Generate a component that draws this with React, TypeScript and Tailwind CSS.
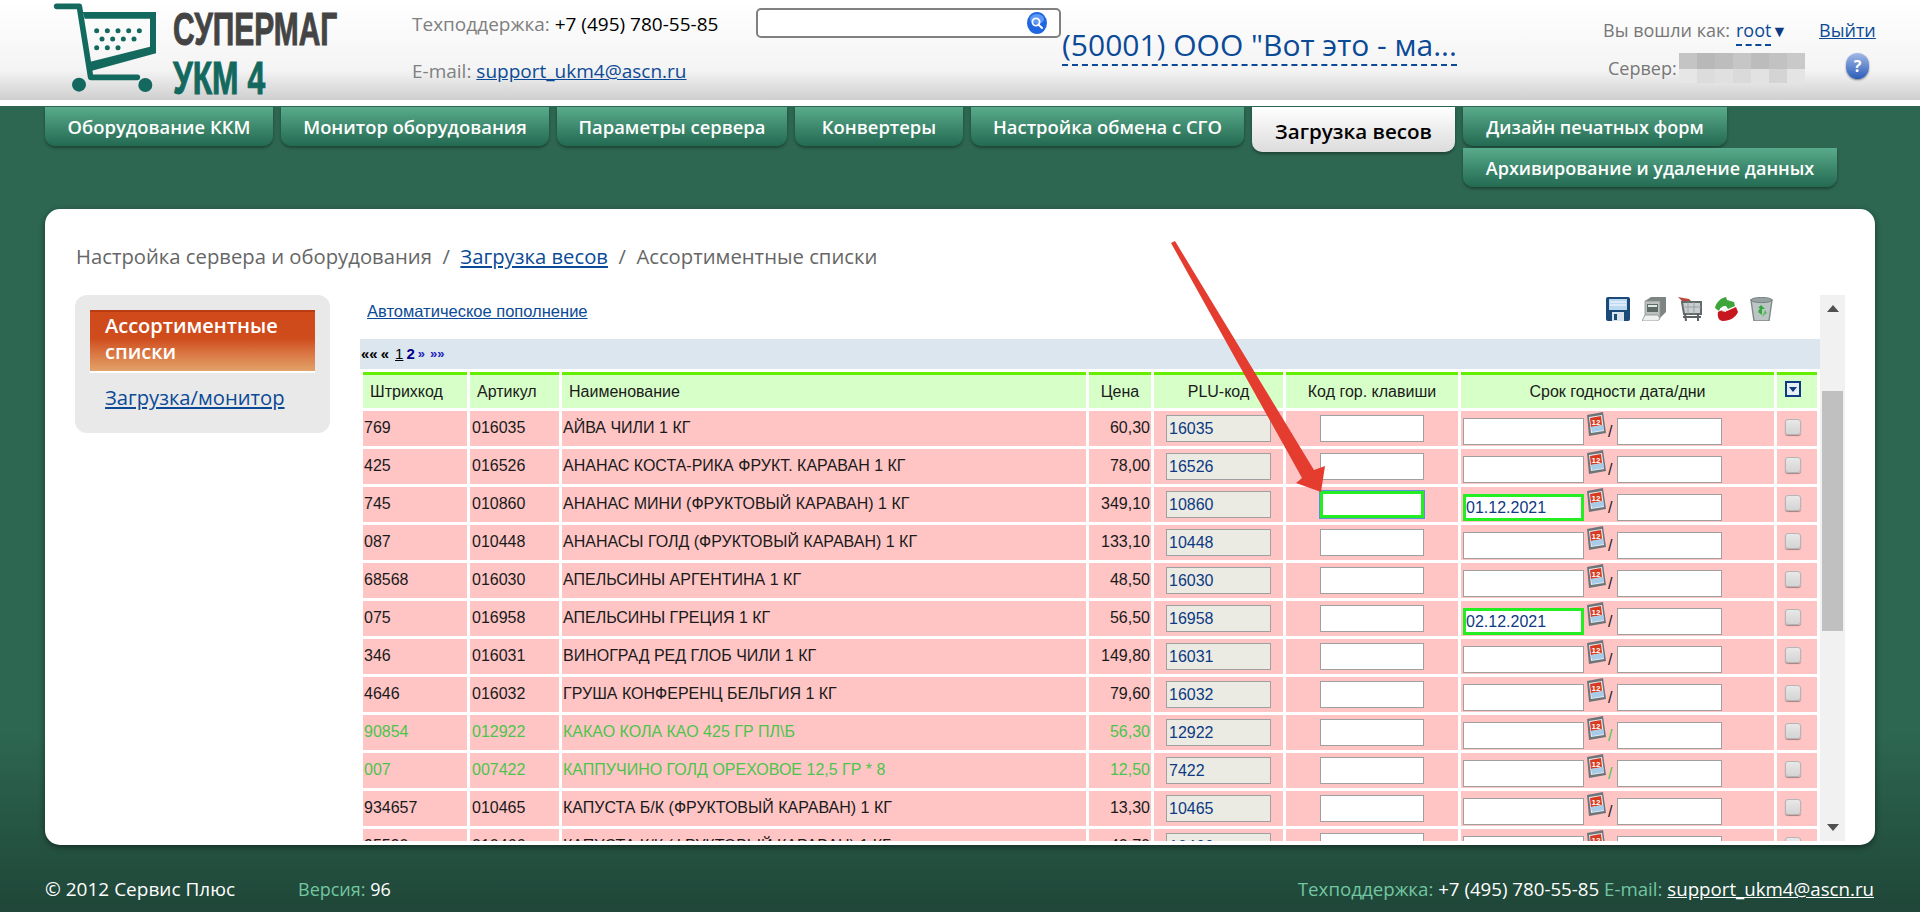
const TABS_LEFT = [
  { label: "Оборудование ККМ", width: "w-[228px]" },
  { label: "Монитор оборудования", width: "w-[268px]" },
  { label: "Параметры сервера", width: "w-[230px]" },
  { label: "Конвертеры", width: "w-[168px]" },
  { label: "Настройка обмена с СГО", width: "w-[273px]" },
];

type Row = {
  code: string;
  article: string;
  name: string;
  price: string;
  plu: string;
  date?: string;
  focus?: boolean;
  green?: boolean;
};

const ROWS: Row[] = [
  { code: "769", article: "016035", name: "АЙВА ЧИЛИ 1 КГ", price: "60,30", plu: "16035" },
  { code: "425", article: "016526", name: "АНАНАС КОСТА-РИКА ФРУКТ. КАРАВАН 1 КГ", price: "78,00", plu: "16526" },
  { code: "745", article: "010860", name: "АНАНАС МИНИ (ФРУКТОВЫЙ КАРАВАН) 1 КГ", price: "349,10", plu: "10860", date: "01.12.2021", focus: true },
  { code: "087", article: "010448", name: "АНАНАСЫ ГОЛД (ФРУКТОВЫЙ КАРАВАН) 1 КГ", price: "133,10", plu: "10448" },
  { code: "68568", article: "016030", name: "АПЕЛЬСИНЫ АРГЕНТИНА 1 КГ", price: "48,50", plu: "16030" },
  { code: "075", article: "016958", name: "АПЕЛЬСИНЫ ГРЕЦИЯ 1 КГ", price: "56,50", plu: "16958", date: "02.12.2021" },
  { code: "346", article: "016031", name: "ВИНОГРАД РЕД ГЛОБ ЧИЛИ 1 КГ", price: "149,80", plu: "16031" },
  { code: "4646", article: "016032", name: "ГРУША КОНФЕРЕНЦ БЕЛЬГИЯ 1 КГ", price: "79,60", plu: "16032" },
  { code: "90854", article: "012922", name: "КАКАО КОЛА КАО 425 ГР ПЛ\\Б", price: "56,30", plu: "12922", green: true },
  { code: "007", article: "007422", name: "КАППУЧИНО ГОЛД ОРЕХОВОЕ 12,5 ГР * 8", price: "12,50", plu: "7422", green: true },
  { code: "934657", article: "010465", name: "КАПУСТА Б/К (ФРУКТОВЫЙ КАРАВАН) 1 КГ", price: "13,30", plu: "10465" },
  { code: "95590", article: "010466", name: "КАПУСТА К/К (ФРУКТОВЫЙ КАРАВАН) 1 КГ", price: "40,70", plu: "10466" },
];

const BLUR_TOP = ["bg-[#c4c4c4]", "bg-[#b8b8b8]", "bg-[#bdbdbd]", "bg-[#c6c6c6]", "bg-[#bcbcbc]", "bg-[#c2c2c2]", "bg-[#c9c9c9]"];
const BLUR_BOTTOM = ["bg-[#e6e6e6]", "bg-[#dcdcdc]", "bg-[#e0e0e0]", "bg-[#dadada]", "bg-[#e2e2e2]", "bg-[#d4d4d4]", "bg-[#e4e4e4]"];

function CartLogo() {
  const dots = [
    [170, 92], [202, 92], [234, 92], [266, 92], [298, 92],
    [186, 117], [218, 117], [250, 117], [282, 117],
    [170, 143], [202, 143], [234, 143],
  ];
  return (
    <svg viewBox="0 0 360 300" className="w-[120px] h-[100px] shrink-0">
      <g fill="none" stroke="#13695e" strokeWidth="17" strokeLinecap="round" strokeLinejoin="round">
        <path d="M50 19H118L152 232H292" />
      </g>
      <path d="M128 36H348V160L156 212L148 186L330 140V56H134Z" fill="#13695e" />
      <circle cx="117" cy="254" r="21" fill="#13695e" />
      <circle cx="316" cy="255" r="21" fill="#13695e" />
      {dots.map(([x, y]) => (
        <circle key={`${x}-${y}`} cx={x} cy={y} r="7.5" fill="#13695e" />
      ))}
    </svg>
  );
}

function SearchIcon() {
  return (
    <svg viewBox="0 0 20 22" className="w-[20px] h-[22px]">
      <ellipse cx="10" cy="11" rx="10" ry="11" fill="#1f66e0" />
      <ellipse cx="10" cy="7" rx="7" ry="5" fill="#5c98f5" />
      <circle cx="9" cy="10" r="3.6" fill="none" stroke="#fff" strokeWidth="1.8" />
      <path d="M11.5 12.6L15 16" stroke="#fff" strokeWidth="2" strokeLinecap="round" />
    </svg>
  );
}

function HelpIcon() {
  return (
    <div className="w-[23px] h-[26px] rounded-full bg-linear-to-b from-[#a3b9e6] to-[#2a5cb8] shadow-[0_1px_2px_rgba(0,0,0,0.45)] flex items-center justify-center text-white text-[16px] font-bold leading-none">
      ?
    </div>
  );
}

function FloppyIcon() {
  return (
    <svg viewBox="0 0 24 24" className="w-[24px] h-[24px]">
      <rect x="0" y="0" width="24" height="24" rx="2" fill="#1c4a78" />
      <rect x="3" y="2" width="18" height="11" fill="#bcd9f2" />
      <path d="M4 5H20M4 8H20" stroke="#fff" strokeWidth="1.2" />
      <rect x="6" y="15" width="12" height="9" fill="#d9e3ec" />
      <rect x="8" y="17" width="3" height="6" fill="#1c4a78" />
    </svg>
  );
}

function PrinterIcon() {
  return (
    <svg viewBox="0 0 24 24" className="w-[24px] h-[24px]">
      <path d="M3 4L9 0H24V15L18 21H3Z" fill="#7d8481" />
      <path d="M3 4H18V21H3Z" fill="#bcc1bf" stroke="#8c928f" strokeWidth="0.8" />
      <rect x="5" y="7" width="11" height="8" fill="#5f6a66" />
      <rect x="6" y="8" width="9" height="2" fill="#dfe8e3" />
      <path d="M0 24L3 18H16L18 22L15 24Z" fill="#eef0ef" stroke="#8a908d" strokeWidth="0.8" />
    </svg>
  );
}

function CartIcon() {
  return (
    <svg viewBox="0 0 24 24" className="w-[24px] h-[24px]">
      <path d="M0 0L11 2L15 6L5 5Z" fill="#b8493e" />
      <path d="M4 5H23V17H6Z" fill="#c9cfd0" stroke="#62696b" strokeWidth="2" />
      <path d="M10 5V17M16 5V17M5 10H23" stroke="#9aa1a3" strokeWidth="1" />
      <path d="M7 17L8 24M20 17V24M5 20H23" stroke="#5a6163" strokeWidth="2" fill="none" />
    </svg>
  );
}

function SwapIcon() {
  return (
    <svg viewBox="0 0 24 24" className="w-[24px] h-[24px]">
      <path d="M1 11C2 5 7 1 12 0L13 3L20 5L21 9L14 12L12 9C8 9 6 11 5 14Z" fill="#3da53a" />
      <path d="M4 15C7 13 10 13 13 14L22 10L24 15C22 20 16 24 9 24C5 24 3 20 4 15Z" fill="#c8181f" />
      <path d="M7 14L13 11L12 15Z" fill="#ecf4ea" />
    </svg>
  );
}

function TrashIcon() {
  return (
    <svg viewBox="0 0 24 24" className="w-[24px] h-[24px]">
      <path d="M1 3H22L19 24H4Z" fill="#bcc5c5" stroke="#7f8888" strokeWidth="1.4" />
      <ellipse cx="11.5" cy="3" rx="10.5" ry="2.6" fill="#98a2a2" stroke="#778080" strokeWidth="1" />
      <path d="M11 8L15 12H12V18L8 15L10 11H8Z" fill="#35a83b" />
      <path d="M15 13L17 16L12 20Z" fill="#5cbe5f" />
    </svg>
  );
}

function CalendarIcon() {
  return (
    <svg viewBox="0 0 20 24" className="w-[20px] h-[24px] shrink-0">
      <path d="M1 3L17 0L20 21L3 24Z" fill="#6f7477" />
      <path d="M3 5L16 3L18 19L5 21Z" fill="#e3edf6" />
      <path d="M4 6L15 4L16 13L5 15Z" fill="#d9391f" />
      <path d="M5 15L17 13L18 18L6 20Z" fill="#a8cbe8" />
      <text x="10" y="12.5" textAnchor="middle" fontSize="8" fontWeight="700" fill="#fff" fontFamily="'Liberation Sans', sans-serif">
        12
      </text>
    </svg>
  );
}

function SortIcon() {
  return (
    <div className="w-[16px] h-[16px] border-2 border-[#0d3a82] bg-[#e6f0f4] flex items-center justify-center">
      <svg viewBox="0 0 8 5" className="w-[8px] h-[5px]">
        <path d="M0 0H8L4 5Z" fill="#0d3a82" />
      </svg>
    </div>
  );
}

function Checkbox() {
  return (
    <div className="w-[16px] h-[16px] rounded-[3px] border border-[#b5b5b5] bg-linear-to-b from-[#e8e8e8] to-[#d4d4d4] shadow-[0_1px_1px_rgba(0,0,0,0.35)]" />
  );
}

function Tab({ label, width }: { label: string; width: string }) {
  return (
    <div
      className={`${width} h-[39px] pt-[1px] rounded-b-[10px] bg-linear-to-b from-[#59ab8c] to-[#236a52] shadow-[0_2px_3px_rgba(0,0,0,0.35)] text-white font-semibold flex items-center justify-center whitespace-nowrap`}
    >
      {label}
    </div>
  );
}

function DataRow({ row }: { row: Row }) {
  const textColor = row.green ? "text-[#4cc44c]" : "text-[#1a1a1a]";
  const dateBorder = row.date ? "border-[3px] border-[#22ee22]" : "border border-[#a0a0a0]";
  const hotBorder = row.focus
    ? "border-[3px] border-[#22ee22] outline outline-1 outline-[#5b8fe0]"
    : "border border-[#a0a0a0]";
  return (
    <tr className={`h-[35px] ${textColor}`}>
      <td className="bg-[#ffc5c5] pl-[1px] pb-[2px] overflow-hidden whitespace-nowrap">{row.code}</td>
      <td className="bg-[#ffc5c5] pl-[2px] pb-[2px] overflow-hidden whitespace-nowrap">{row.article}</td>
      <td className="bg-[#ffc5c5] pl-[1px] pb-[2px] overflow-hidden whitespace-nowrap">{row.name}</td>
      <td className="bg-[#ffc5c5] pr-[1px] pb-[2px] text-right whitespace-nowrap">{row.price}</td>
      <td className="bg-[#ffc5c5] align-top pt-[4px] pl-[12px]">
        <div className="w-[105px] h-[27px] border border-[#a0a0a0] bg-[#ebebe4] text-[#0d3a82] pl-[2px] flex items-center">
          {row.plu}
        </div>
      </td>
      <td className="bg-[#ffc5c5] align-top pt-[4px] pl-[34px]">
        <div className={`w-[104px] h-[27px] bg-white ${hotBorder}`} />
      </td>
      <td className="bg-[#ffc5c5] align-top pl-[2px]">
        <div className="flex items-start">
          <div className={`w-[121px] h-[27px] mt-[7px] bg-white text-[#0d3a82] flex items-center ${dateBorder}`}>
            {row.date}
          </div>
          <div className="ml-[2px] mt-[1px]">
            <CalendarIcon />
          </div>
          <span className="ml-[2px] mt-[12px] leading-[18px] w-[9px]">/</span>
          <div className="w-[105px] h-[27px] mt-[7px] bg-white border border-[#a0a0a0]" />
        </div>
      </td>
      <td className="bg-[#ffc5c5] align-top pt-[8px] pl-[8px]">
        <Checkbox />
      </td>
    </tr>
  );
}

export default function App() {
  return (
    <div className="relative h-[912px] w-[1920px] overflow-hidden flex flex-col bg-linear-to-b from-[#2d6751] via-[#2d6751] via-80% to-[#1f4638] font-['Open_Sans',sans-serif]">
      <header className="h-[106px] shrink-0 bg-white">
        <div className="h-[100px] flex bg-linear-to-b from-white via-[#f4f4f4] via-70% to-[#cfcfcf]">
          <div className="ml-[40px]">
            <CartLogo />
          </div>
          <div className="ml-[13px] w-[239px] shrink-0 font-['Liberation_Sans',sans-serif] font-bold uppercase whitespace-nowrap">
            <div className="h-[60px] pt-[6px] text-[#444] text-[46px] leading-[46px] origin-left scale-x-[0.65] [-webkit-text-stroke:1px_#444]">Супермаг</div>
            <div className="text-[#13695e] text-[46px] leading-[36px] origin-left scale-x-[0.69] [-webkit-text-stroke:1px_#13695e]">УКМ 4</div>
          </div>
          <div className="w-[344px] shrink-0 text-[19px] text-[#808080] whitespace-nowrap">
            <div className="mt-[11px] leading-[26px]">
              Техподдержка: <span className="text-black">+7 (495) 780-55-85</span>
            </div>
            <div className="mt-[21px] leading-[26px]">
              E-mail: <a className="text-[#0b4a96] underline">support_ukm4@ascn.ru</a>
            </div>
          </div>
          <div className="w-[305px] h-[30px] mt-[8px] shrink-0 rounded-[5px] border-2 border-[#808080] bg-white flex items-center justify-end pr-[12px]">
            <SearchIcon />
          </div>
          <div className="ml-[1px] w-[541px] shrink-0">
            <div className="inline-block mt-[26px] h-[40px] border-b-2 border-dashed border-[#0b4a96] text-[#0b4a96] text-[30px] leading-[38px] whitespace-nowrap">
              (50001) ООО "Вот это - ма...
            </div>
          </div>
          <div className="flex-1 text-[18px] text-[#777] whitespace-nowrap">
            <div className="flex mt-[17px] leading-[26px]">
              <span className="w-[133px]">Вы вошли как:</span>
              <span className="w-[83px]">
                <span className="text-[#0b4a96] border-b-2 border-dashed border-[#0b4a96] pb-[2px]">root</span>
                <span className="text-[#0d3a82] text-[16px]">▼</span>
              </span>
              <a className="text-[#0b4a96] underline">Выйти</a>
            </div>
            <div className="flex mt-[9px] h-[30px]">
              <span className="ml-[5px] w-[71px] leading-[30px]">Сервер:</span>
              <div className="w-[126px] h-[30px] flex flex-col">
                <div className="flex h-[16px]">
                  {BLUR_TOP.map((c, i) => (
                    <div key={i} className={`w-[18px] ${c}`} />
                  ))}
                </div>
                <div className="flex h-[14px]">
                  {BLUR_BOTTOM.map((c, i) => (
                    <div key={i} className={`w-[18px] ${c}`} />
                  ))}
                </div>
              </div>
              <div className="ml-[41px]">
                <HelpIcon />
              </div>
            </div>
          </div>
        </div>
      </header>

      <nav className="h-[103px] shrink-0 pl-[45px] pt-[1px] flex gap-[8px] items-start text-[18.4px]">
        {TABS_LEFT.map((t) => (
          <Tab key={t.label} label={t.label} width={t.width} />
        ))}
        <div className="w-[203px] h-[45px] pt-[3px] rounded-b-[10px] bg-linear-to-b from-white to-[#dcdcdc] shadow-[0_2px_3px_rgba(0,0,0,0.35)] text-black text-[20.6px] font-semibold flex items-center justify-center whitespace-nowrap">
          Загрузка весов
        </div>
        <div className="flex flex-col gap-[2px] items-start text-[18px]">
          <Tab label="Дизайн печатных форм" width="w-[264px]" />
          <Tab label="Архивирование и удаление данных" width="w-[374px]" />
        </div>
      </nav>

      <main className="ml-[45px] w-[1830px] h-[636px] shrink-0 rounded-[15px] bg-white shadow-[0_2px_6px_rgba(0,0,0,0.45)] pl-[30px] pt-[32px] overflow-hidden">
        <div className="h-[30px] ml-[1px] text-[20.25px] leading-[30px] text-[#666] whitespace-nowrap">
          Настройка сервера и оборудования&nbsp; /&nbsp; <a className="text-[#0b4a96] underline">Загрузка весов</a>&nbsp; /&nbsp; Ассортиментные списки
        </div>
        <div className="mt-[24px] flex items-start">
          <aside className="w-[255px] h-[138px] shrink-0 rounded-[12px] bg-[#e9e9e9] pt-[15px] px-[15px]">
            <div className="h-[61px] border-t-2 border-[#b93c12] bg-linear-to-b from-[#d04a1a] via-[#cf4c1c] via-45% to-[#e2a268] pl-[15px] text-white text-[20px] font-semibold leading-[26px] pt-[1px] whitespace-nowrap">
              Ассортиментные
              <br />
              списки
            </div>
            <div className="h-[2px] bg-white" />
            <a className="block mt-[10px] pl-[15px] text-[20.2px] leading-[28px] text-[#0b4a96] underline whitespace-nowrap">Загрузка/монитор</a>
          </aside>

          <section className="ml-[30px] w-[1485px] h-[546px] shrink-0 flex overflow-hidden font-['Liberation_Sans',Arial,sans-serif] text-[16px]">
            <div className="w-[1460px] shrink-0">
              <div className="h-[44px] flex items-start justify-between pl-[7px]">
                <a className="mt-[6px] text-[16.5px] leading-[20px] text-[#0b4a96] underline">Автоматическое пополнение</a>
                <div className="flex gap-[12px] mt-[2px] mr-[46px]">
                  <FloppyIcon />
                  <PrinterIcon />
                  <CartIcon />
                  <SwapIcon />
                  <TrashIcon />
                </div>
              </div>
              <div className="h-[30px] bg-[#dce6ef] pl-[1px] flex items-center gap-[3px] font-bold text-[15px] text-black">
                <span>««</span>
                <span>«</span>
                <span className="underline font-normal ml-[3px]">1</span>
                <span className="text-[#00008b]">2</span>
                <span className="text-[#2222bb] text-[13px]">»</span>
                <span className="text-[#2222bb] text-[13px] ml-[2px]">»»</span>
              </div>
              <table className="table-fixed border-separate border-spacing-[3px] w-[1460px] -mb-[3px]">
                <colgroup>
                  <col className="w-[104px]" />
                  <col className="w-[89px]" />
                  <col className="w-[524px]" />
                  <col className="w-[62px]" />
                  <col className="w-[129px]" />
                  <col className="w-[172px]" />
                  <col className="w-[313px]" />
                  <col className="w-[40px]" />
                </colgroup>
                <thead>
                  <tr className="h-[36px] text-[#1a1a1a]">
                    <th className="border-t-[3px] border-[#66ee00] bg-[#d7ffc8] font-normal text-left pl-[7px]">Штрихкод</th>
                    <th className="border-t-[3px] border-[#66ee00] bg-[#d7ffc8] font-normal text-left pl-[7px]">Артикул</th>
                    <th className="border-t-[3px] border-[#66ee00] bg-[#d7ffc8] font-normal text-left pl-[7px]">Наименование</th>
                    <th className="border-t-[3px] border-[#66ee00] bg-[#d7ffc8] font-normal text-center">Цена</th>
                    <th className="border-t-[3px] border-[#66ee00] bg-[#d7ffc8] font-normal text-center">PLU-код</th>
                    <th className="border-t-[3px] border-[#66ee00] bg-[#d7ffc8] font-normal text-center">Код гор. клавиши</th>
                    <th className="border-t-[3px] border-[#66ee00] bg-[#d7ffc8] font-normal text-center">Срок годности дата/дни</th>
                    <th className="border-t-[3px] border-[#66ee00] bg-[#d7ffc8] font-normal align-top pt-[6px] pl-[8px]">
                      <SortIcon />
                    </th>
                  </tr>
                </thead>
                <tbody>
                  {ROWS.map((row) => (
                    <DataRow key={row.article} row={row} />
                  ))}
                </tbody>
              </table>
            </div>
            <div className="w-[25px] shrink-0 bg-[#f1f1f1] flex flex-col items-center">
              <svg viewBox="0 0 12 7" className="w-[12px] h-[7px] mt-[10px] shrink-0">
                <path d="M6 0L12 7H0Z" fill="#505050" />
              </svg>
              <div className="w-[21px] h-[240px] mt-[79px] bg-[#c0c0c0]" />
              <svg viewBox="0 0 12 7" className="w-[12px] h-[7px] mt-[193px] shrink-0">
                <path d="M0 0H12L6 7Z" fill="#505050" />
              </svg>
            </div>
          </section>
        </div>
      </main>

      <footer className="flex-1 pl-[45px] pr-[46px] pt-[31px] flex justify-between text-[18px] leading-[26px] text-white whitespace-nowrap">
        <div className="flex">
          <span className="w-[253px] text-[19px]">© 2012 Сервис Плюс</span>
          <span>
            <span className="text-[#72c6a1]">Версия:</span> 96
          </span>
        </div>
        <div className="text-[18.7px]">
          <span className="text-[#72c6a1]">Техподдержка:</span> +7 (495) 780-55-85{" "}
          <span className="text-[#72c6a1]">E-mail:</span> <a className="underline">support_ukm4@ascn.ru</a>
        </div>
      </footer>

      <svg viewBox="0 0 1920 912" className="absolute inset-0 w-[1920px] h-[912px] pointer-events-none">
        <polygon points="1171,243 1175,241 1314,470 1325,466 1321,492 1296,483 1302,478" fill="#e43d30" />
      </svg>
    </div>
  );
}
